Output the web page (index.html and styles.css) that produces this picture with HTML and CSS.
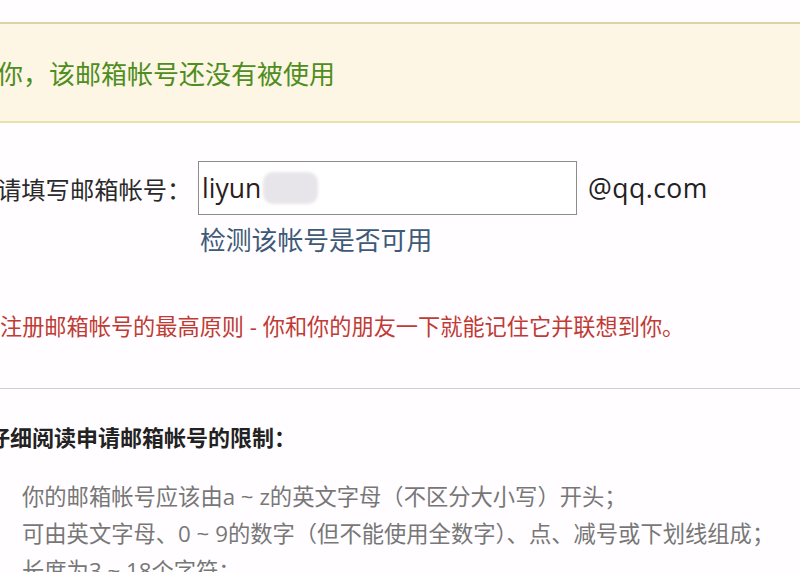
FILE: index.html
```html
<!DOCTYPE html>
<html lang="zh-CN">
<head>
  <meta charset="UTF-8" />
  <meta name="viewport" content="width=device-width, initial-scale=1.0" />
  <title>注册邮箱帐号</title>
  <link rel="stylesheet" href="styles.css">
</head>
<body>

<div class="notice">
  <span class="notice-text">你，该邮箱帐号还没有被使用</span>
</div>

<div class="form-row">
  <label class="label">请填写邮箱帐号：</label>
  <div class="field">liyun<span class="blur"></span></div>
  <span class="domain">@qq.com</span>
</div>

<div class="check">
  <a class="check-link">检测该帐号是否可用</a>
</div>

<p class="rule">注册邮箱帐号的最高原则 - 你和你的朋友一下就能记住它并联想到你。</p>

<hr class="divider" />

<h3 class="limit-title">仔细阅读申请邮箱帐号的限制：</h3>
<ul class="limits">
  <li>你的邮箱帐号应该由a ~ z的英文字母（不区分大小写）开头；</li>
  <li>可由英文字母、0 ~ 9的数字（但不能使用全数字）、点、减号或下划线组成；</li>
  <li>长度为3 ~ 18个字符；</li>
</ul>

</body>
</html>
```

FILE: styles.css
```css
body {
  font-family: "Open Sans", "Noto Sans CJK SC", sans-serif;
  background: #fffdff;
  margin: 0;
  padding: 22px 0 0;
  overflow: hidden;
}
.notice {
  display: flex;
  align-items: center;
  height: 97px;
  background: #fdf6e4;
  border-top: 2px solid #dcd3a4;
  border-bottom: 2px solid #e9e2a8;
}
.notice-text {
  margin-left: -3px;
  font-size: 26px;
  color: #4f8d1e;
}
.form-row {
  display: flex;
  align-items: center;
  margin-top: 38px;
  height: 54px;
}
.label {
  width: 201px;
  margin-left: -3px;
  font-size: 24.3px;
  color: #2a2a2a;
}
.field {
  display: flex;
  align-items: center;
  box-sizing: border-box;
  width: 379px;
  height: 54px;
  padding-left: 3px;
  border: 1px solid #8c8c8c;
  background: #fff;
  font-size: 26.5px;
  color: #2a2020;
}
.blur {
  display: inline-block;
  width: 55px;
  height: 32px;
  margin-left: 2px;
  border-radius: 10px;
  background: #e8e5ea;
  filter: blur(1.5px);
}
.domain {
  margin-left: 11px;
  font-size: 26.5px;
  letter-spacing: 0.5px;
  color: #222;
}
.check {
  margin-top: 10px;
  padding-left: 200px;
  line-height: 30px;
}
.check-link {
  font-size: 25.8px;
  color: #3e5a77;
  cursor: pointer;
}
.rule {
  margin: 53px 0 0;
  line-height: 30px;
  font-size: 22.2px;
  color: #bf3b34;
}
.divider {
  margin: 46px 0 0;
  border: 0;
  border-top: 1px solid #cfcfcf;
}
.limit-title {
  margin: 33px 0 0 -12px;
  line-height: 30px;
  font-size: 22px;
  color: #222;
}
.limits {
  list-style: none;
  margin: 26px 0 0;
  padding-left: 22px;
  font-size: 22.3px;
  line-height: 37px;
  color: #777;
}
```
